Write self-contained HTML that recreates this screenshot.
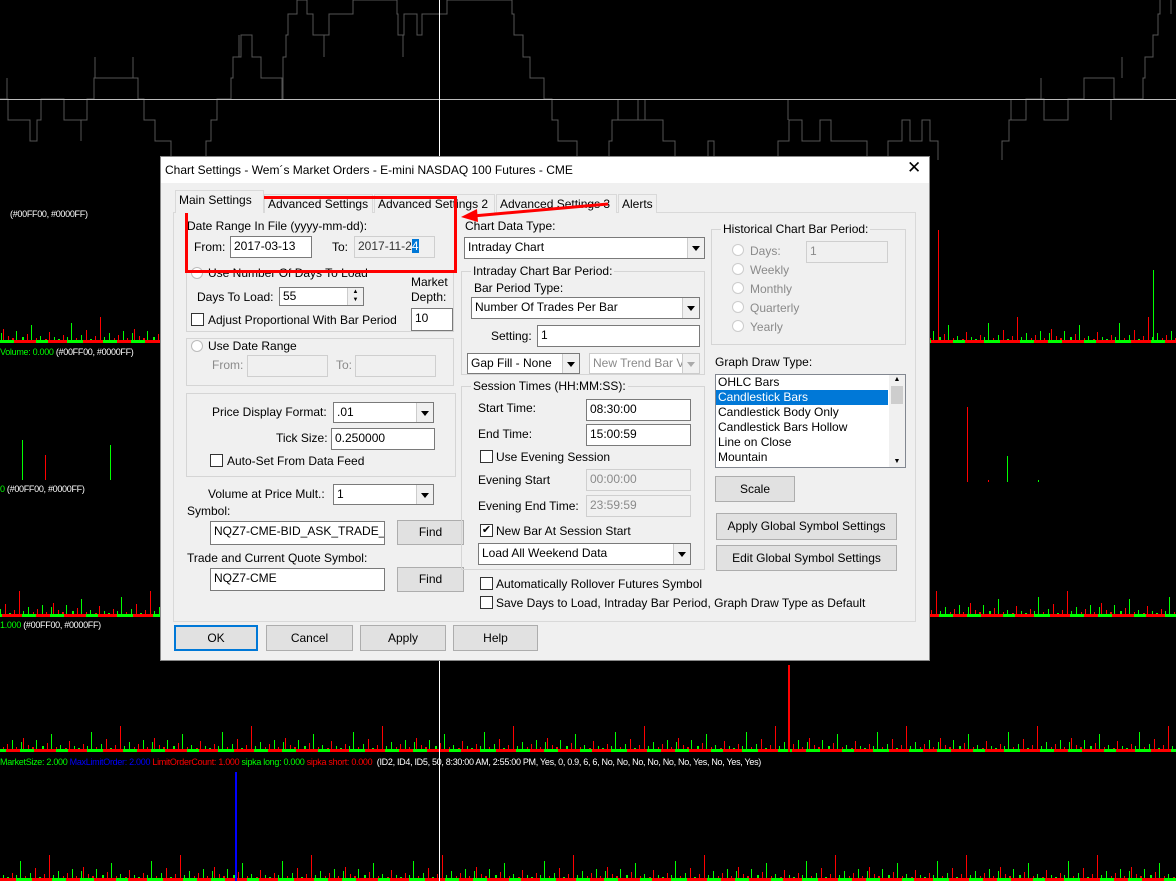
<!DOCTYPE html>
<html><head><meta charset="utf-8"><style>
*{box-sizing:border-box;margin:0;padding:0}
body{width:1176px;height:881px;background:#000;position:relative;overflow:hidden;font-family:"Liberation Sans",Arial,sans-serif;font-size:12px;color:#000}
.a{position:absolute;white-space:nowrap}
.lab{position:absolute;font-size:9px;color:#fff;white-space:nowrap;letter-spacing:-0.3px}
#dlg{position:absolute;left:160px;top:156px;width:770px;height:505px;background:#f0f0f0;border:1px solid #888}
.t{position:absolute;white-space:nowrap;line-height:14px}
.in{position:absolute;background:#fff;border:1px solid #7a7a7a;padding:2px 3px;line-height:15px;overflow:hidden;white-space:nowrap}
.dis{background:#f0f0f0;border-color:#cfcfcf;color:#8a8a8a}
.cb{position:absolute;background:#fff;border:1px solid #7a7a7a;padding:2px 3px;line-height:15px;overflow:hidden;white-space:nowrap}
.cb:after{content:"";position:absolute;right:0;top:0;width:16px;height:100%;background:#f0f0f0;border-left:1px solid #ccc}
.cb i{position:absolute;right:4px;top:50%;margin-top:-2px;width:0;height:0;border-left:4px solid transparent;border-right:4px solid transparent;border-top:5px solid #000;z-index:2}
.btn{position:absolute;background:#e1e1e1;border:1px solid #adadad;text-align:center;line-height:22px}
.grp{position:absolute;border:1px solid #d5d5d5}
.chk{position:absolute;width:13px;height:13px;border:1px solid #333;background:#fff}
.rad{position:absolute;width:12px;height:12px;border:1px solid #bbb;border-radius:50%;background:#fff}
.tab{position:absolute;top:37px;height:19px;border:1px solid #d9d9d9;border-bottom:none;background:#f0f0f0;line-height:18px;padding:0 3px;white-space:nowrap}
</style></head><body>
<svg class="a" style="left:0;top:0" width="1176" height="881">
<defs>
<pattern id="sp" width="131" height="80" patternUnits="userSpaceOnUse">
<rect x="1" y="70" width="1" height="10" fill="#0f0"/><rect x="3" y="66" width="1" height="14" fill="#f00"/><rect x="8" y="73" width="1" height="7" fill="#f00"/><rect x="12" y="75" width="2" height="5" fill="#f00"/><rect x="16" y="68" width="1" height="12" fill="#0f0"/><rect x="22" y="74" width="2" height="6" fill="#0f0"/><rect x="27" y="71" width="1" height="9" fill="#f00"/><rect x="31" y="62" width="1" height="18" fill="#0f0"/><rect x="36" y="75" width="1" height="5" fill="#f00"/><rect x="40" y="73" width="1" height="7" fill="#0f0"/><rect x="45" y="76" width="2" height="4" fill="#f00"/><rect x="49" y="69" width="1" height="11" fill="#f00"/><rect x="54" y="74" width="1" height="6" fill="#0f0"/><rect x="58" y="76" width="2" height="4" fill="#0f0"/><rect x="63" y="72" width="1" height="8" fill="#f00"/><rect x="67" y="74" width="1" height="6" fill="#0f0"/><rect x="71" y="60" width="1" height="20" fill="#0f0"/><rect x="76" y="75" width="1" height="5" fill="#f00"/><rect x="81" y="72" width="1" height="8" fill="#0f0"/><rect x="86" y="67" width="1" height="13" fill="#f00"/><rect x="90" y="76" width="2" height="4" fill="#0f0"/><rect x="95" y="73" width="1" height="7" fill="#f00"/><rect x="100" y="54" width="1" height="26" fill="#f00"/><rect x="104" y="74" width="1" height="6" fill="#0f0"/><rect x="109" y="70" width="1" height="10" fill="#0f0"/><rect x="114" y="75" width="1" height="5" fill="#f00"/><rect x="118" y="72" width="1" height="8" fill="#f00"/><rect x="123" y="68" width="1" height="12" fill="#0f0"/><rect x="127" y="75" width="1" height="5" fill="#f00"/>
<rect x="0" y="77" width="14" height="3" fill="#0f0"/><rect x="14" y="77" width="22" height="3" fill="#f00"/><rect x="36" y="77" width="12" height="3" fill="#0f0"/><rect x="48" y="77" width="19" height="3" fill="#f00"/><rect x="67" y="77" width="16" height="3" fill="#0f0"/><rect x="83" y="77" width="20" height="3" fill="#f00"/><rect x="103" y="77" width="14" height="3" fill="#0f0"/><rect x="117" y="77" width="14" height="3" fill="#f00"/>
</pattern>
</defs>
<g transform="translate(0,263)"><rect width="1176" height="80" fill="url(#sp)"/></g>
<g transform="translate(50,537)"><rect x="-50" width="1176" height="80" fill="url(#sp)"/></g>
<g transform="translate(20,672)"><rect x="-20" width="1176" height="80" fill="url(#sp)"/></g>
<g transform="translate(80,801)"><rect x="-80" width="1176" height="80" fill="url(#sp)"/></g>
<rect x="22" y="440" width="1" height="40" fill="#0f0"/><rect x="45" y="455" width="1" height="25" fill="#f00"/><rect x="110" y="445" width="1" height="35" fill="#0f0"/><rect x="967" y="407" width="1" height="75" fill="#f00"/><rect x="1007" y="456" width="1" height="26" fill="#0f0"/><rect x="1038" y="480" width="1" height="2" fill="#0f0"/><rect x="988" y="480" width="1" height="2" fill="#f00"/>
<rect x="938" y="230" width="1" height="113" fill="#f00"/><rect x="1153" y="270" width="1" height="73" fill="#0f0"/>
<rect x="235" y="772" width="2" height="109" fill="#00f"/>
<rect x="788" y="665" width="2" height="87" fill="#f00"/>
<g fill="none" stroke="#555" stroke-width="1">
<polyline points="0,99 8,99 8,120 18,120 18,120 30,120 30,141 37,141 37,120 41,120 41,99 64,99 64,120 87,120 87,99 94,99 94,78 138,78 138,99 144,99 144,120 155,120 155,141 171,141 171,160"/>
<polyline points="206,160 206,141 211,141 211,120 217,120 217,99 231,99 231,78 233,78 233,57 241,57 241,35 252,35 252,57 261,57 261,78 282,78 282,99 283,99 283,57 286,57 286,35 288,35 288,14 297,14 297,0 307,0 307,14 313,14 313,35 329,35 329,14 353,14 353,0 397,0 397,14 398,14 398,35 404,35 404,14 417,14 417,35 422,35 422,14 447,14 447,0 512,0 512,14 514,14 514,35 523,35 523,57 530,57 530,78 544,78 544,99 552,99 552,120 558,120 558,141 577,141 577,160"/>
<polyline points="609,160 609,141 612,141 612,120 663,120 663,141 675,141 675,160"/>
<polyline points="708,160 708,141 714,141 714,160"/>
<polyline points="778,160 778,141 789,141 789,120 802,120 802,141 820,141 820,120 831,120 831,141 867,141 867,160"/>
<polyline points="888,160 888,141 902,141 902,120 910,120 910,141 922,141 922,120 930,120 930,141 938,141 938,160"/>
<polyline points="1002,160 1002,141 1009,141 1009,120 1026,120 1026,99 1044,99 1044,120 1068,120 1068,99 1084,99 1084,78 1114,78 1114,99 1143,99 1143,78 1145,78 1145,57 1153,57 1153,35 1158,35 1158,14 1160,14 1160,0"/>
</g>
<g stroke="#555"><line x1="7" y1="78" x2="7" y2="99"/><line x1="95" y1="57" x2="95" y2="78"/><line x1="133" y1="57" x2="133" y2="78"/><line x1="81" y1="120" x2="81" y2="141"/><line x1="324" y1="35" x2="324" y2="57"/><line x1="403" y1="35" x2="403" y2="57"/><line x1="239" y1="35" x2="239" y2="57"/><line x1="618" y1="99" x2="618" y2="120"/><line x1="638" y1="99" x2="638" y2="120"/><line x1="645" y1="99" x2="645" y2="120"/><line x1="788" y1="99" x2="788" y2="120"/><line x1="1011" y1="99" x2="1011" y2="120"/><line x1="1041" y1="78" x2="1041" y2="99"/><line x1="1122" y1="57" x2="1122" y2="78"/><line x1="1111" y1="99" x2="1111" y2="120"/><line x1="1171" y1="0" x2="1171" y2="14"/></g>
<rect x="0" y="99" width="1176" height="1" fill="#bbb"/>
<rect x="439" y="0" width="1" height="881" fill="#fff"/>
</svg>
<div class="lab" style="left:10px;top:209px">(#00FF00, #0000FF)</div>
<div class="lab" style="left:0;top:347px"><span style="color:#0f0">Volume: 0.000</span> (#00FF00, #0000FF)</div>
<div class="lab" style="left:0;top:484px"><span style="color:#0f0">0</span> (#00FF00, #0000FF)</div>
<div class="lab" style="left:0;top:620px"><span style="color:#0f0">1.000</span> (#00FF00, #0000FF)</div>
<div class="lab" style="left:0;top:757px"><span style="color:#0f0">MarketSize: 2.000</span> <span style="color:#00f">MaxLimitOrder: 2.000</span> <span style="color:#f00">LimitOrderCount: 1.000</span> <span style="color:#0f0">sipka long: 0.000</span> <span style="color:#f00">sipka short: 0.000</span> &nbsp;(ID2, ID4, ID5, 50, 8:30:00 AM, 2:55:00 PM, Yes, 0, 0.9, 6, 6, No, No, No, No, No, No, Yes, No, Yes, Yes)</div>

<div id="dlg">
<div class="a" style="left:0;top:0;width:768px;height:26px;background:#fff"></div>
<div class="t" style="left:4px;top:6px">Chart Settings - Wem´s Market Orders - E-mini NASDAQ 100 Futures - CME</div>
<div class="t" style="left:746px;top:4px;font-size:17px">✕</div>
<div class="a" style="left:12px;top:55px;width:743px;height:410px;border:1px solid #d9d9d9;background:#f0f0f0"></div>
<div class="tab" style="left:14px;top:33px;height:23px;width:89px;background:#f0f0f0;z-index:2;border-color:#d9d9d9">Main Settings</div>
<div class="tab" style="left:103px;width:109px">Advanced Settings</div>
<div class="tab" style="left:213px;width:121px">Advanced Settings 2</div>
<div class="tab" style="left:335px;width:121px">Advanced Settings 3</div>
<div class="tab" style="left:457px">Alerts</div>

<div class="t" style="left:26px;top:62px">Date Range In File (yyyy-mm-dd):</div>
<div class="t" style="left:33px;top:83px">From:</div>
<div class="in" style="left:69px;top:79px;width:82px;height:22px">2017-03-13</div>
<div class="t" style="left:171px;top:83px">To:</div>
<div class="in dis" style="left:193px;top:79px;width:81px;height:22px;color:#333">2017-11-2<span style="background:#0078d7;color:#fff">4</span></div>

<div class="grp" style="left:25px;top:115px;width:268px;height:60px"></div>
<div class="rad" style="left:30px;top:110px"></div>
<div class="t" style="left:47px;top:109px;background:#f0f0f0">Use Number Of Days To Load</div>
<div class="t" style="left:36px;top:133px">Days To Load:</div>
<div class="in" style="left:118px;top:130px;width:85px;height:19px;line-height:13px">55</div>
<div class="a" style="left:186px;top:131px;width:16px;height:17px;background:#f0f0f0;border-left:1px solid #ccc;font-size:6px;line-height:8px;text-align:center">▲<br>▼</div>
<div class="t" style="left:250px;top:118px">Market</div>
<div class="t" style="left:250px;top:133px">Depth:</div>
<div class="in" style="left:250px;top:151px;width:42px;height:23px">10</div>
<div class="chk" style="left:30px;top:156px"></div>
<div class="t" style="left:47px;top:156px">Adjust Proportional With Bar Period</div>

<div class="grp" style="left:25px;top:181px;width:268px;height:48px"></div>
<div class="rad" style="left:30px;top:183px"></div>
<div class="t" style="left:47px;top:182px;background:#f0f0f0">Use Date Range</div>
<div class="t" style="left:51px;top:201px;color:#8a8a8a">From:</div>
<div class="in dis" style="left:86px;top:198px;width:81px;height:22px"></div>
<div class="t" style="left:175px;top:201px;color:#8a8a8a">To:</div>
<div class="in dis" style="left:194px;top:198px;width:81px;height:22px"></div>

<div class="grp" style="left:25px;top:236px;width:270px;height:84px"></div>
<div class="t" style="left:51px;top:248px">Price Display Format:</div>
<div class="cb" style="left:172px;top:245px;width:101px;height:21px">.01<i></i></div>
<div class="t" style="left:115px;top:274px">Tick Size:</div>
<div class="in" style="left:170px;top:271px;width:104px;height:22px">0.250000</div>
<div class="chk" style="left:49px;top:297px"></div>
<div class="t" style="left:66px;top:297px">Auto-Set From Data Feed</div>

<div class="t" style="left:47px;top:330px">Volume at Price Mult.:</div>
<div class="cb" style="left:172px;top:327px;width:101px;height:21px">1<i></i></div>
<div class="t" style="left:26px;top:347px">Symbol:</div>
<div class="in" style="left:49px;top:364px;width:175px;height:24px">NQZ7-CME-BID_ASK_TRADE_</div>
<div class="btn" style="left:236px;top:363px;width:67px;height:25px">Find</div>
<div class="t" style="left:26px;top:394px">Trade and Current Quote Symbol:</div>
<div class="in" style="left:49px;top:411px;width:175px;height:23px">NQZ7-CME</div>
<div class="btn" style="left:236px;top:410px;width:67px;height:25px">Find</div>

<div class="t" style="left:304px;top:62px">Chart Data Type:</div>
<div class="cb" style="left:303px;top:80px;width:241px;height:22px">Intraday Chart<i></i></div>
<div class="grp" style="left:300px;top:114px;width:244px;height:104px"></div>
<div class="t" style="left:310px;top:107px;background:#f0f0f0;padding:0 2px">Intraday Chart Bar Period:</div>
<div class="t" style="left:313px;top:124px">Bar Period Type:</div>
<div class="cb" style="left:310px;top:140px;width:229px;height:22px">Number Of Trades Per Bar<i></i></div>
<div class="t" style="left:330px;top:172px">Setting:</div>
<div class="in" style="left:376px;top:168px;width:163px;height:22px">1</div>
<div class="cb" style="left:306px;top:196px;width:113px;height:21px">Gap Fill - None<i></i></div>
<div class="cb" style="left:428px;top:196px;width:111px;height:21px;color:#8a8a8a;border-color:#ccc">New Trend Bar V<i style="border-top-color:#aaa"></i></div>

<div class="grp" style="left:300px;top:229px;width:244px;height:184px"></div>
<div class="t" style="left:310px;top:222px;background:#f0f0f0;padding:0 2px">Session Times (HH:MM:SS):</div>
<div class="t" style="left:317px;top:244px">Start Time:</div>
<div class="in" style="left:425px;top:242px;width:105px;height:22px">08:30:00</div>
<div class="t" style="left:317px;top:270px">End Time:</div>
<div class="in" style="left:425px;top:267px;width:105px;height:22px">15:00:59</div>
<div class="chk" style="left:319px;top:293px"></div>
<div class="t" style="left:335px;top:293px">Use Evening Session</div>
<div class="t" style="left:317px;top:316px">Evening Start</div>
<div class="in dis" style="left:425px;top:312px;width:105px;height:22px">00:00:00</div>
<div class="t" style="left:317px;top:342px">Evening End Time:</div>
<div class="in dis" style="left:425px;top:338px;width:105px;height:22px">23:59:59</div>
<div class="chk" style="left:319px;top:367px;font-size:11px;line-height:11px;text-align:center">✔</div>
<div class="t" style="left:335px;top:367px">New Bar At Session Start</div>
<div class="cb" style="left:317px;top:386px;width:213px;height:22px">Load All Weekend Data<i></i></div>
<div class="chk" style="left:319px;top:420px"></div>
<div class="t" style="left:335px;top:420px">Automatically Rollover Futures Symbol</div>
<div class="chk" style="left:319px;top:439px"></div>
<div class="t" style="left:335px;top:439px">Save Days to Load, Intraday Bar Period, Graph Draw Type as Default</div>

<div class="grp" style="left:550px;top:72px;width:195px;height:116px"></div>
<div class="t" style="left:560px;top:65px;background:#f0f0f0;padding:0 2px">Historical Chart Bar Period:</div>
<div class="rad" style="left:571px;top:87px;border-color:#ccc"></div><div class="t" style="left:589px;top:87px;color:#8a8a8a">Days:</div>
<div class="in dis" style="left:645px;top:84px;width:82px;height:22px">1</div>
<div class="rad" style="left:571px;top:106px;border-color:#ccc"></div><div class="t" style="left:589px;top:106px;color:#8a8a8a">Weekly</div>
<div class="rad" style="left:571px;top:125px;border-color:#ccc"></div><div class="t" style="left:589px;top:125px;color:#8a8a8a">Monthly</div>
<div class="rad" style="left:571px;top:144px;border-color:#ccc"></div><div class="t" style="left:589px;top:144px;color:#8a8a8a">Quarterly</div>
<div class="rad" style="left:571px;top:163px;border-color:#ccc"></div><div class="t" style="left:589px;top:163px;color:#8a8a8a">Yearly</div>

<div class="t" style="left:554px;top:198px">Graph Draw Type:</div>
<div class="a" style="left:554px;top:217px;width:191px;height:94px;background:#fff;border:1px solid #828790;line-height:15px">
<div style="padding-left:2px">OHLC Bars</div>
<div style="padding-left:2px;background:#0078d7;color:#fff;width:172px">Candlestick Bars</div>
<div style="padding-left:2px">Candlestick Body Only</div>
<div style="padding-left:2px">Candlestick Bars Hollow</div>
<div style="padding-left:2px">Line on Close</div>
<div style="padding-left:2px">Mountain</div>
<div class="a" style="right:0;top:0;width:16px;height:92px;background:#f0f0f0;font-size:7px;text-align:center;line-height:10px">▲<div style="background:#cdcdcd;height:18px;margin:1px 2px"></div><div style="position:absolute;bottom:0;width:16px">▼</div></div>
</div>
<div class="btn" style="left:554px;top:319px;width:80px;height:26px;line-height:24px">Scale</div>
<div class="btn" style="left:555px;top:356px;width:181px;height:27px;line-height:25px">Apply Global Symbol Settings</div>
<div class="btn" style="left:555px;top:388px;width:181px;height:26px;line-height:24px">Edit Global Symbol Settings</div>

<div class="btn" style="left:13px;top:468px;width:84px;height:26px;border:2px solid #0078d7;line-height:22px">OK</div>
<div class="btn" style="left:105px;top:468px;width:87px;height:26px;line-height:24px">Cancel</div>
<div class="btn" style="left:199px;top:468px;width:86px;height:26px;line-height:24px">Apply</div>
<div class="btn" style="left:292px;top:468px;width:85px;height:26px;line-height:24px">Help</div>
</div>
<div class="a" style="left:185px;top:196px;width:272px;height:77px;border:3px solid #f00"></div>
<svg class="a" style="left:455px;top:195px" width="160" height="30"><line x1="153" y1="9" x2="18" y2="21" stroke="#f00" stroke-width="3"/><polygon points="6,22 22,14 23,27" fill="#f00"/></svg>
</body></html>
